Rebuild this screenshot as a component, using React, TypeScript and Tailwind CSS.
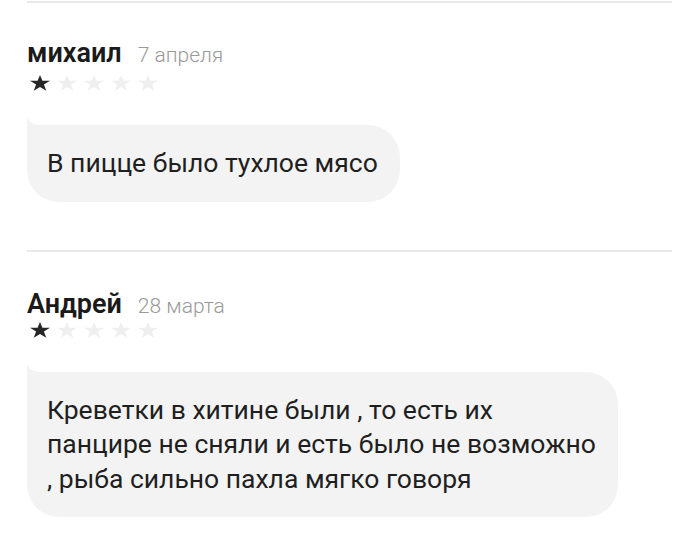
import React from "react";

const Star = ({ filled }: { filled: boolean }) => (
  <svg width="20" height="16" viewBox="0 0 24 23" preserveAspectRatio="none" className="shrink-0">
    <path
      d="M12 0l2.9 8.2H24l-7.3 5.5 2.8 8.8L12 17.2l-7.5 5.3 2.8-8.8L0 8.2h9.1z"
      fill={filled ? "#262626" : "#efefef"}
    />
  </svg>
);

const Stars = ({ count, className }: { count: number; className?: string }) => (
  <div className={"flex gap-[7px] h-[16px] pl-[3px] " + (className ?? "")}>
    {[0, 1, 2, 3, 4].map((i) => (
      <Star key={i} filled={i < count} />
    ))}
  </div>
);

const Bubble = ({ children, className }: { children: React.ReactNode; className?: string }) => (
  <div className={"relative self-start " + (className ?? "")}>
    <svg width="22" height="9" viewBox="0 0 22 9" className="absolute -top-[8px] left-0">
      <path d="M0 0 C1.5 5 7 9 22 9 L0 9 Z" fill="#f3f3f3" />
    </svg>
    <div className="bg-[#f3f3f3] rounded-[32px] rounded-tl-none text-[#1f1f1f] text-[26.5px] leading-[34.5px] pl-[20px] pr-[22px] py-[21px]">
      {children}
    </div>
  </div>
);

const Review = ({
  name,
  date,
  stars,
  children,
  headClass,
  starsClass,
  bubbleClass,
}: {
  name: string;
  date: string;
  stars: number;
  children: React.ReactNode;
  headClass: string;
  starsClass: string;
  bubbleClass: string;
}) => (
  <div className="border-t-[2px] border-[#e9e9e9] flex flex-col">
    <div className={"flex items-baseline gap-[16px] h-[30px] " + headClass}>
      <span className="text-[27px] leading-[30px] font-semibold text-[#1a1a1a]">{name}</span>
      <span className="text-[21px] leading-[26px] font-light text-[#999999]">{date}</span>
    </div>
    <Stars count={stars} className={starsClass} />
    <Bubble className={bubbleClass}>{children}</Bubble>
  </div>
);

export default function App() {
  return (
    <div
      className="w-[700px] h-[557px] bg-white overflow-hidden pl-[27px] pr-[28px] pt-[1px]"
      style={{ fontFamily: "Roboto, 'Open Sans', sans-serif" }}
    >
      <Review
        name="михаил"
        date="7 апреля"
        stars={1}
        headClass="box-content pt-[35px]"
        starsClass="mt-[7px]"
        bubbleClass="mt-[34px] mb-[48px]"
      >
        <div>В пицце было тухлое мясо</div>
      </Review>
      <Review
        name="Андрей"
        date="28 марта"
        stars={1}
        headClass="box-content pt-[37px]"
        starsClass="mt-[3px]"
        bubbleClass="mt-[34px]"
      >
        <div>
          Креветки в хитине были , то есть их
          <br />
          панцире не сняли и есть было не возможно
          <br />, рыба сильно пахла мягко говоря
        </div>
      </Review>
    </div>
  );
}
